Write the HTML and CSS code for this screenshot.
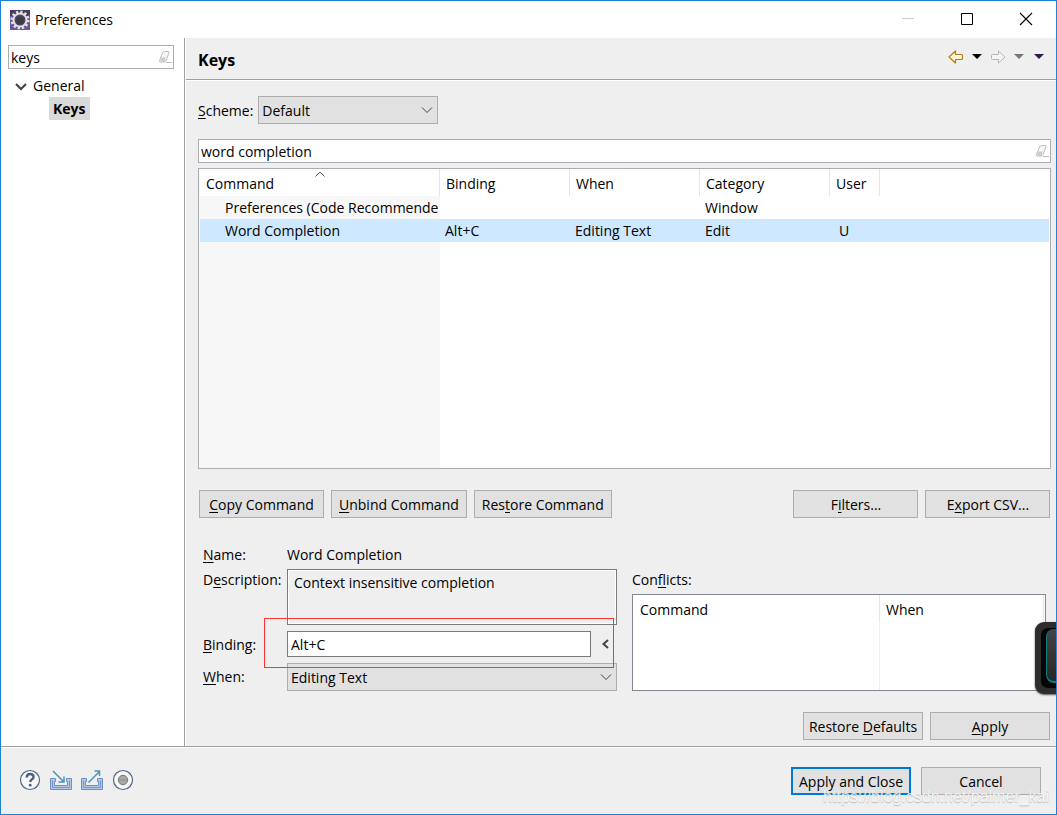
FILE: index.html
```html
<!DOCTYPE html>
<html lang="en">
<head>
<meta charset="utf-8">
<title>Preferences</title>
<link rel="stylesheet" href="styles.css">
</head>
<body>
<div class="window">
  <header class="titlebar">
    <svg class="app-icon" width="20" height="20" viewBox="0 0 20 20" aria-hidden="true">
      <rect width="20" height="20" fill="#6a55a0"/>
      <path d="M0 0h20v6H0z" fill="#4b3b5e"/>
      <circle cx="10" cy="10" r="8" fill="none" stroke="#e6e1dc" stroke-width="3" stroke-dasharray="2.200 1.990"/>
      <circle cx="10" cy="10" r="6.500" fill="#4a4663" stroke="#e3dfdc" stroke-width="2"/>
      <circle cx="10" cy="10.500" r="4" fill="#3b3b4d"/>
    </svg>
    <h1 class="window-title">Preferences</h1>
    <div class="caption-buttons">
      <button class="caption" aria-label="Minimize" disabled><svg width="14" height="14" viewBox="0 0 14 14"><path d="M1 6.500h12" stroke="#ccc"/></svg></button>
      <button class="caption" aria-label="Maximize"><svg width="14" height="14" viewBox="0 0 14 14"><path d="M1.500 1.500h11v11h-11z" fill="none" stroke="#000"/></svg></button>
      <button class="caption" aria-label="Close"><svg width="14" height="14" viewBox="0 0 14 14"><path d="M1 1l12 12M13 1L1 13" stroke="#000" stroke-width="1.100"/></svg></button>
    </div>
  </header>

  <div class="body">
    <nav class="sidebar">
      <div class="search">
        <input class="search-input" type="text" value="keys" aria-label="Filter preferences">
        <button class="clear" aria-label="Clear"><svg width="14" height="14" viewBox="0 0 14 14"><path d="M6.500 1.500H10q1.500 0 1 1.500L8 10.500q-.6 1.500-2 1.500H2.500Q1 12 1.500 10.500L4.500 3q.6-1.500 2-1.500z" fill="#f6f6f6" stroke="#bcbcbc"/><path d="M3.500 7.500h3L5 11.500H2z" fill="#ccc"/><path d="M7 7.500L5.500 12M8 12.500h6" stroke="#bcbcbc" fill="none"/></svg></button>
      </div>
      <ul class="tree">
        <li><svg class="twisty" width="12" height="8" viewBox="0 0 12 8" aria-hidden="true"><path d="M1 1l5 5 5-5" fill="none" stroke="#404040" stroke-width="2"/></svg><span>General</span>
          <ul><li><span class="current">Keys</span></li></ul>
        </li>
      </ul>
    </nav>

    <main class="page">
      <div class="page-head">
        <h2 class="page-title">Keys</h2>
        <div class="nav-tools">
          <button class="tool" aria-label="Back"><svg width="16" height="14" viewBox="0 0 16 14"><path d="M1 7L7.500 1V4.500h6q1 0 1 1v3q0 1-1 1h-6V13z" fill="#fff8d2" stroke="#b87a14" stroke-width="1.200" stroke-linejoin="round"/></svg></button>
          <button class="tool" aria-label="Back history"><svg width="10" height="5" viewBox="0 0 10 5"><path d="M0 0h10L5 5z" fill="#000"/></svg></button>
          <button class="tool" aria-label="Forward"><svg width="16" height="14" viewBox="0 0 16 14"><path d="M15 7L8.500 1V4.500h-6q-1 0-1 1v3q0 1 1 1h6V13z" fill="#f4f4f4" stroke="#b4b4b4" stroke-linejoin="round"/></svg></button>
          <button class="tool" aria-label="Forward history"><svg width="10" height="5" viewBox="0 0 10 5"><path d="M0 0h10L5 5z" fill="#777"/></svg></button>
          <button class="tool" aria-label="Menu"><svg width="10" height="5" viewBox="0 0 10 5"><path d="M0 0h10L5 5z" fill="#32184f"/></svg></button>
        </div>
      </div>

      <div class="content">
        <div class="scheme">
          <label for="scheme"><u>S</u>cheme:</label>
          <div class="select scheme-select">
            <select id="scheme"><option>Default</option></select>
            <svg class="arrow" width="12" height="8" viewBox="0 0 12 8" aria-hidden="true"><path d="M1 1.500l5 5 5-5" fill="none" stroke="#444"/></svg>
          </div>
        </div>

        <div class="search">
          <input class="search-input" type="text" value="word completion" aria-label="Filter commands">
          <button class="clear" aria-label="Clear"><svg width="14" height="14" viewBox="0 0 14 14"><path d="M6.500 1.500H10q1.500 0 1 1.500L8 10.500q-.6 1.500-2 1.500H2.500Q1 12 1.500 10.500L4.500 3q.6-1.500 2-1.500z" fill="#f6f6f6" stroke="#bcbcbc"/><path d="M3.500 7.500h3L5 11.500H2z" fill="#ccc"/><path d="M7 7.500L5.500 12M8 12.500h6" stroke="#bcbcbc" fill="none"/></svg></button>
        </div>

        <div class="grid-box commands">
          <table class="grid">
            <colgroup><col class="c-command"><col class="c-mid"><col class="c-mid"><col class="c-mid"><col class="c-user"><col></colgroup>
            <thead>
              <tr><th class="sorted">Command<svg class="sort" width="10" height="6" viewBox="0 0 10 6" aria-hidden="true"><path d="M.5 5.500L5 1l4.500 4.500" fill="none" stroke="#555"/></svg></th><th>Binding</th><th>When</th><th>Category</th><th>User</th><th class="rest"></th></tr>
            </thead>
            <tbody>
              <tr><td>Preferences (Code Recommende</td><td></td><td></td><td>Window</td><td></td><td></td></tr>
              <tr class="selected"><td>Word Completion</td><td>Alt+C</td><td>Editing Text</td><td>Edit</td><td class="user">U</td><td></td></tr>
            </tbody>
          </table>
        </div>

        <div class="actions">
          <button class="btn medium"><u>C</u>opy Command</button>
          <button class="btn"><u>U</u>nbind Command</button>
          <button class="btn">Res<u>t</u>ore Command</button>
          <button class="btn medium push">F<u>i</u>lters...</button>
          <button class="btn medium">E<u>x</u>port CSV...</button>
        </div>

        <div class="details">
          <div class="form">
            <span class="label"><u>N</u>ame:</span>
            <span class="label">Word Completion</span>
            <label class="label" for="desc">D<u>e</u>scription:</label>
            <textarea id="desc" class="description" readonly>Context insensitive completion</textarea>
            <label class="row-label" for="binding"><u>B</u>inding:</label>
            <div class="binding-row">
              <input id="binding" class="binding" type="text" value="Alt+C">
              <button class="key-menu" aria-label="Special keys"><svg width="8" height="10" viewBox="0 0 8 10"><path d="M7 1L2.500 5 7 9" fill="none" stroke="#444" stroke-width="2"/></svg></button>
              <span class="highlight"></span>
            </div>
            <label class="row-label" for="when"><u>W</u>hen:</label>
            <div class="select">
              <select id="when"><option>Editing Text</option></select>
              <svg class="arrow" width="12" height="8" viewBox="0 0 12 8" aria-hidden="true"><path d="M1 1.500l5 5 5-5" fill="none" stroke="#444"/></svg>
            </div>
          </div>
          <div class="conflicts">
            <span class="label">Con<u>f</u>licts:</span>
            <div class="grid-box conflict-box">
              <table class="grid">
                <colgroup><col class="c-conflict"><col></colgroup>
                <thead><tr><th>Command</th><th>When</th></tr></thead>
                <tbody><tr class="empty"><td></td><td></td></tr></tbody>
              </table>
            </div>
          </div>
        </div>

        <div class="page-buttons">
          <button class="btn fixed">Restore <u>D</u>efaults</button>
          <button class="btn fixed"><u>A</u>pply</button>
        </div>
      </div>
    </main>
  </div>

  <footer class="footer">
    <button class="tool" aria-label="Help"><svg width="22" height="22" viewBox="0 0 22 22"><circle cx="11" cy="11" r="9.500" fill="#f7f7f9" stroke="#50658a" stroke-width="1.200"/><path d="M7.700 8.500q0-3.500 3.400-3.500t3.400 3q0 1.600-1.700 2.500-1.500.9-1.500 2.500" fill="none" stroke="#4a6080" stroke-width="2.400"/><circle cx="11.200" cy="16.200" r="1.400" fill="#4a6080"/></svg></button>
    <button class="tool" aria-label="Import"><svg width="22" height="22" viewBox="0 0 22 22"><path d="M.5 9.500h5v3H4.500v4h13v-4h-1v-3h5v11H.5z" fill="#b4c8e8" stroke="#6f90c4"/><path d="M2.500 11.500v7h17v-7" fill="none" stroke="#7895c6"/><path d="M3 2l10.500 10.500M14 7.500V13H8.500" fill="none" stroke="#4e94bb" stroke-width="1.500"/></svg></button>
    <button class="tool" aria-label="Export"><svg width="22" height="22" viewBox="0 0 22 22"><path d="M.5 9.500h5v3H4.500v4h13v-4h-1v-3h5v11H.5z" fill="#b4c8e8" stroke="#6f90c4"/><path d="M2.500 11.500v7h17v-7" fill="none" stroke="#7895c6"/><path d="M7.500 13.500L18 3M13.500 2H18.500V7" fill="none" stroke="#4e94bb" stroke-width="1.500"/></svg></button>
    <button class="tool" aria-label="Record"><svg width="22" height="22" viewBox="0 0 22 22"><circle cx="11" cy="11" r="9.500" fill="#f7f7f5" stroke="#50658a" stroke-width="1.200"/><circle cx="11" cy="11" r="4.700" fill="#a8a8a8" stroke="#777"/><path d="M7 11h8" stroke="#8d8d8d"/></svg></button>
    <div class="dialog-buttons">
      <button class="btn fixed primary">Apply and Close</button>
      <button class="btn fixed">Cancel</button>
    </div>
  </footer>
  <div class="watermark">https://blog.csdn.net/palmer_kai</div>
  <div class="dock"><div class="dock-well"><div class="dock-key"></div></div></div>
</div>
</body>
</html>
```
FILE: styles.css
```css
* { box-sizing: border-box; }

body {
  margin: 0;
  font: 14px/20px "Open Sans", "Noto Sans", sans-serif;
  color: #000;
}

button, input, select, textarea { font: inherit; color: inherit; margin: 0; }
button { padding: 0; border: 0; background: none; }
svg { display: block; }
u { text-underline-offset: 2px; text-decoration-thickness: 1px; text-decoration-skip-ink: none; }

.window {
  position: relative;
  display: flex;
  flex-direction: column;
  min-height: 100vh;
  overflow: hidden;
  border: 1px solid #1883d7;
  background: #efefef;
}

.titlebar {
  display: flex;
  align-items: center;
  height: 37px;
  padding: 0 1px 0 9px;
  gap: 5px;
  background: #fff;
}
.window-title { margin: 0; font-size: 14px; font-weight: 400; }
.caption-buttons { display: flex; margin-left: auto; }
.caption { display: grid; place-items: center; width: 59px; height: 36px; padding-bottom: 2px; }

.body { display: flex; flex: 1; border-bottom: 1px solid #a0a0a0; }

.sidebar {
  width: 184px;
  padding: 7px 10px 0 7px;
  border-right: 1px solid #a0a0a0;
  background: #fff;
}

.search { position: relative; }
.search-input {
  display: block;
  width: 100%;
  height: 24px;
  padding: 0 24px 0 2px;
  border: 1px solid #abadb3;
  background: #fff;
}
.clear { position: absolute; top: 5px; right: 2px; }

.tree, .tree ul { margin: 0; padding: 0; list-style: none; }
.tree { padding: 5px 0 0 25px; line-height: 23px; }
.tree ul { padding-left: 16px; }
.tree li { position: relative; }
.twisty { position: absolute; left: -18px; top: 9px; }
.current { display: inline-block; padding: 0 4px; background: #d9d9d9; font-weight: 700; }

.page { display: flex; flex: 1; flex-direction: column; min-width: 0; border-left: 1px solid #fff; }
.page-head {
  display: flex;
  align-items: center;
  justify-content: space-between;
  height: 42px;
  padding: 2px 12px 0;
  border-bottom: 1px solid #a0a0a0;
  box-shadow: 0 1px #fff;
}
.page-title { margin: 0; font-size: 16px; line-height: 24px; }
.nav-tools { display: flex; align-items: center; gap: 8px; padding-bottom: 6px; }
.nav-tools .tool:last-child { margin-left: 2px; }

.content { display: flex; flex: 1; flex-direction: column; padding: 16px 5px 6px 12px; }

.scheme { display: flex; align-items: center; gap: 5px; margin-bottom: 15px; }
.scheme label { padding-top: 2px; }
.select { position: relative; }
.scheme-select { width: 180px; }
.select select {
  display: block;
  width: 100%;
  height: 28px;
  padding: 2px 24px 0 3px;
  border: 1px solid #adadad;
  border-radius: 0;
  background: #e1e1e1;
  appearance: none;
}
.arrow { position: absolute; right: 5px; top: 10px; pointer-events: none; }

.grid-box { border: 1px solid #abadb3; background: #fff; }
.commands {
  flex: 1;
  margin-top: 5px;
  padding: 0 1px;
  background: linear-gradient(#f7f7f7, #f7f7f7) left / 241px 100% no-repeat #fff;
}
.grid { width: 100%; border-collapse: separate; border-spacing: 0; table-layout: fixed; }
.c-command { width: 240px; }
.c-mid { width: 130px; }
.c-user { width: 50px; }
.grid th {
  height: 27px;
  padding: 3px 6px 0 6px;
  border-right: 1px solid #e5e5e5;
  background: #fff;
  font-weight: 400;
  text-align: left;
}
.commands th:last-child { border-right: 0; }
.conflict-box th:first-child { padding-left: 7px; }
.sorted { position: relative; }
.sort { position: absolute; right: 114px; top: 2px; }
.grid td { height: 23px; padding: 0 0 0 5px; overflow: hidden; white-space: nowrap; }
.commands td:first-child { padding-left: 25px; }
.commands td.user { padding-left: 9px; }
.selected { background: #cde8ff; }

.actions { display: flex; gap: 7px; padding: 21px 1px 26px; }
.push { margin-left: auto; }
.btn {
  height: 28px;
  padding: 2px 6px 0 7px;
  border: 1px solid #adadad;
  background: #e1e1e1;
  white-space: nowrap;
}
.btn:nth-child(-n+3) { padding-right: 7px; }
.medium { width: 125px; }
.fixed, .fixed:nth-child(-n+3) { width: 120px; padding: 2px 0 0; }
.btn.primary { border: 2px solid #0078d7; }

.details {
  display: grid;
  grid-template-columns: 1fr 1fr;
  gap: 15px;
  padding: 0 5px;
}
.form {
  display: grid;
  grid-template-columns: 84px 1fr;
  grid-template-rows: 25px 62px 32px 28px;
}
.label { line-height: 22px; }
.row-label { line-height: 28px; }
.description {
  display: block;
  width: 100%;
  height: 56px;
  padding: 3px 6px;
  border: 1px solid #7a7a7a;
  outline: 1px solid #fff;
  outline-offset: -2px;
  background: #efefef;
  resize: none;
}
.binding-row { position: relative; display: flex; height: 26px; }
.binding { flex: 1; min-width: 0; padding: 2px 3px 0; border: 1px solid #7a7a7a; background: #fff; }
.key-menu { display: grid; place-items: center; width: 26px; padding-left: 2px; }
.highlight {
  position: absolute;
  inset: -13px 3px -11px -23px;
  z-index: 1;
  border: 1px solid #f33;
  pointer-events: none;
}

.conflicts { display: flex; flex-direction: column; padding-top: 25px; }
.conflict-box { display: flex; flex: 1; margin-top: 3px; padding-right: 1px; border-color: #828790; }
.c-conflict { width: 247px; }
.conflict-box .empty td { height: 67px; }
.conflict-box .empty td:first-child { border-right: 1px solid #eef0f6; }

.page-buttons { display: flex; justify-content: flex-end; gap: 7px; padding: 21px 1px 0; }

.footer {
  display: flex;
  align-items: center;
  gap: 9px;
  padding: 19px 15px 19px 18px;
  border-top: 1px solid #fff;
}
.footer > .tool { padding-bottom: 2px; }
.dialog-buttons { display: flex; gap: 10px; margin-left: auto; }

.watermark {
  position: absolute;
  right: 7px;
  bottom: 6px;
  color: #f8f8f8;
  font: 16px/22px "Liberation Sans", Arial, sans-serif;
  text-shadow: 0 1px 1px #aaa;
  opacity: 0.8;
  pointer-events: none;
}

.dock {
  position: absolute;
  right: -10px;
  top: 621px;
  width: 31px;
  height: 72px;
  padding: 6px 0 6px 6px;
  border-radius: 9px;
  background: #2d2d2d;
  box-shadow: 0 1px 2px #555;
}
.dock-well { height: 60px; padding: 1px 0 5px 5px; border-radius: 7px; background: #050505; }
.dock-key {
  height: 54px;
  border-left: 1px solid #087f83;
  border-bottom: 2px solid #087f83;
  border-radius: 8px;
  background: linear-gradient(#444, #272727);
}
```
